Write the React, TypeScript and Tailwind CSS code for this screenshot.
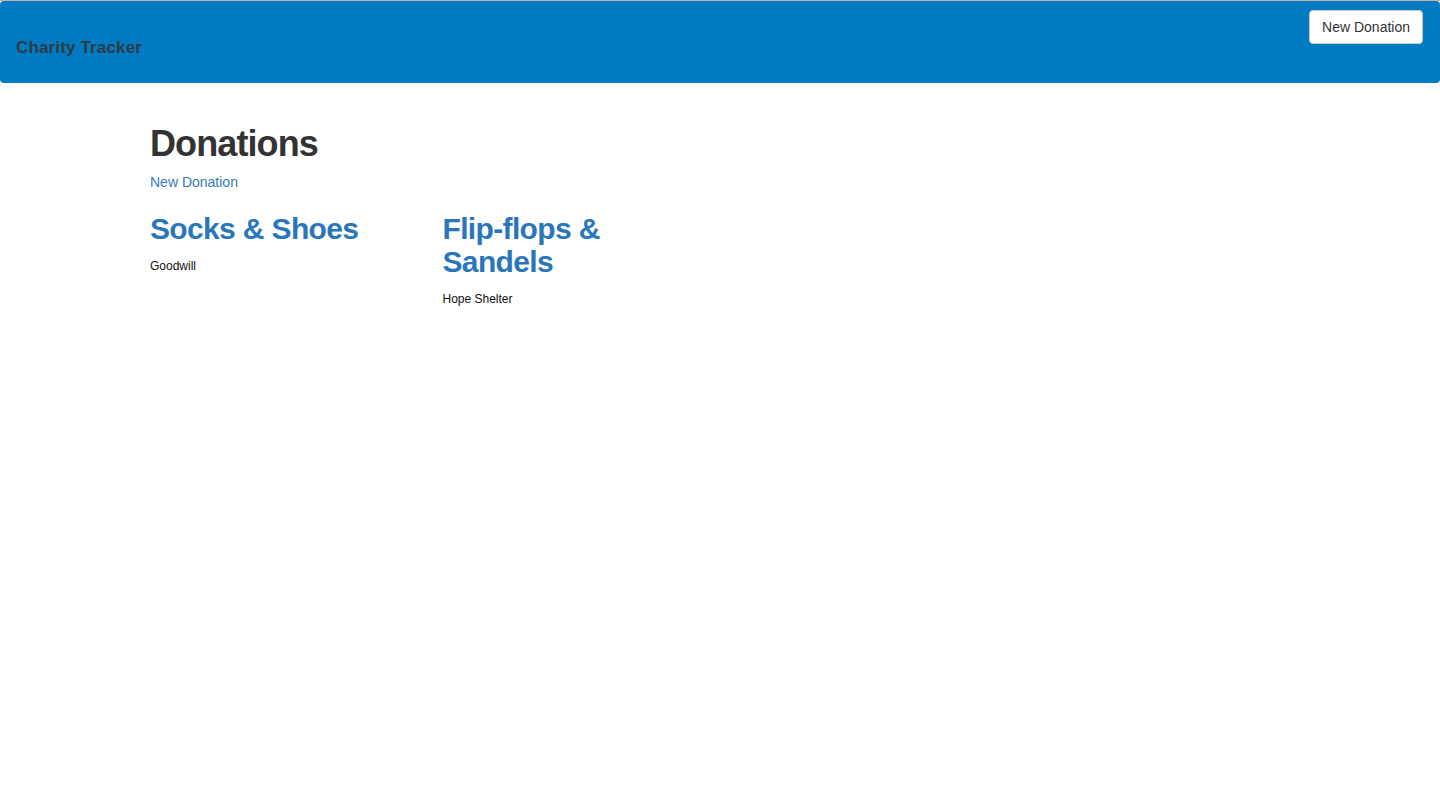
export default function App() {
  const donations = [
    { item: "Socks & Shoes", charity: "Goodwill" },
    { item: "Flip-flops & Sandels", charity: "Hope Shelter" },
  ];

  return (
    <div className="min-h-[799px] bg-white font-['Liberation_Sans',Arial,sans-serif] text-[14px] text-[#333] border-t border-[#b5b5b5]">
      <nav className="h-[82px] bg-[#007bc1] rounded-[4px] flex justify-between items-start px-4">
        <span className="mt-[37px] text-[17px] leading-[20px] font-bold text-[#2f3a45] tracking-[0.15px]">Charity Tracker</span>
        <button className="mt-[9px] mr-[1px] h-[34px] px-[12px] bg-white rounded-[4px] border border-[#ccc] text-[14px] text-[#333]">
          New Donation
        </button>
      </nav>

      <div className="w-[1170px] mx-auto px-[15px]">
        <h1 className="mt-[41px] mb-[8px] text-[36px] leading-[40px] font-bold tracking-[-0.9px] text-[#333]">Donations</h1>
        <a href="#" className="block leading-[20px] text-[#337ab7]">New Donation</a>

        <div className="grid grid-cols-4 -mx-[15px]">
          {donations.map((d) => (
            <div key={d.item} className="px-[15px]">
              <h2 className="mt-[20px] mb-[10px] text-[30px] leading-[33px] font-bold tracking-[-0.65px] text-[#2a76bb]">
                <a href="#">{d.item}</a>
              </h2>
              <p className="text-[12px] leading-[22px] text-[#111]">{d.charity}</p>
            </div>
          ))}
        </div>
      </div>
    </div>
  );
}
